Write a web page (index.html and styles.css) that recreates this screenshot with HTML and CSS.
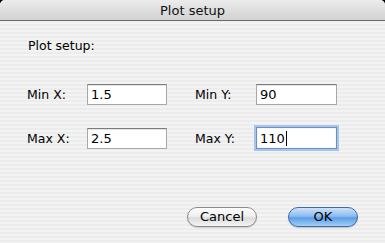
FILE: index.html
```html
<!DOCTYPE html>
<html>
<head>
<meta charset="utf-8">
<link rel="stylesheet" href="styles.css">
</head>
<body>
<div class="window">
  <div class="titlebar">Plot setup</div>
  <div class="content">
    <div class="heading">Plot setup:</div>
    <div class="form">
      <label class="lbl">Min X:</label>
      <div class="field">1.5</div>
      <label class="lbl">Min Y:</label>
      <div class="field">90</div>
      <label class="lbl">Max X:</label>
      <div class="field">2.5</div>
      <label class="lbl">Max Y:</label>
      <div class="field focus">110<span class="caret"></span></div>
    </div>
    <div class="buttons">
      <div class="btn cancel">Cancel</div>
      <div class="btn ok">OK</div>
    </div>
  </div>
</div>
</body>
</html>
```
FILE: styles.css
```css
html, body {
  margin: 0;
  padding: 0;
  background: #000;
}
body {
  width: 385px;
  height: 243px;
  overflow: hidden;
  font-family: "DejaVu Sans", "Liberation Sans", sans-serif;
  font-size: 12.5px;
  color: #000;
}
.window {
  width: 385px;
  height: 243px;
  border-radius: 5px 5px 0 0;
  overflow: hidden;
  display: flex;
  flex-direction: column;
  background: repeating-linear-gradient(to bottom, #ececec 0px, #ececec 2px, #f3f3f3 2px, #f3f3f3 4px);
}
.titlebar {
  height: 21px;
  flex: none;
  box-sizing: border-box;
  border-bottom: 1px solid #6c6c6c;
  background: linear-gradient(to bottom, #ececec 0%, #dcdcdc 60%, #d2d2d2 100%);
  text-align: center;
  font-size: 13px;
  line-height: 21px;
  color: #111;
}
.content {
  padding: 17px 0 0 27px;
  display: flex;
  flex-direction: column;
}
.heading {
  line-height: 16px;
  padding-left: 1px;
}
.form {
  margin-top: 30px;
  display: grid;
  grid-template-columns: 60px 80px 28px 61px 81px;
  grid-template-rows: 21px 22px;
  row-gap: 22px;
  align-items: center;
}
.form .lbl:nth-child(3), .form .lbl:nth-child(7) {
  grid-column: 4;
}
.field {
  height: 21px;
  box-sizing: border-box;
  background: #fff;
  border: 1px solid #a8a8a8;
  border-top-color: #7c7c7c;
  box-shadow: inset 0 1px 0 #e4e4e4;
  padding-left: 3px;
  font-size: 13px;
  line-height: 19px;
  display: flex;
  align-items: center;
}
.field.focus {
  height: 22px;
  border: 1px solid #6a8fc4;
  box-shadow: 0 0 0 2px #a9c4e6, inset 0 0 1px #8db0de;
}
.caret {
  display: inline-block;
  width: 1px;
  height: 15px;
  background: #000;
  margin-left: 1px;
}
.buttons {
  margin-top: 58px;
  display: flex;
  gap: 31px;
  padding-left: 160px;
}
.btn {
  width: 70px;
  height: 20px;
  box-sizing: border-box;
  border-radius: 10px;
  text-align: center;
  font-size: 13px;
  line-height: 18px;
}
.cancel {
  border: 1px solid #8a8a8a;
  background: linear-gradient(to bottom, #fdfdfd 0%, #f0f0f0 45%, #dcdcdc 55%, #f4f4f4 100%);
  box-shadow: 0 1px 1px rgba(0,0,0,0.15);
}
.ok {
  border: 1px solid #3f6aa8;
  background: linear-gradient(to bottom, #cfe2f8 0%, #8cbcf0 45%, #5d9de6 55%, #9fd0fb 100%);
  box-shadow: 0 1px 1px rgba(0,0,0,0.2);
}
```
